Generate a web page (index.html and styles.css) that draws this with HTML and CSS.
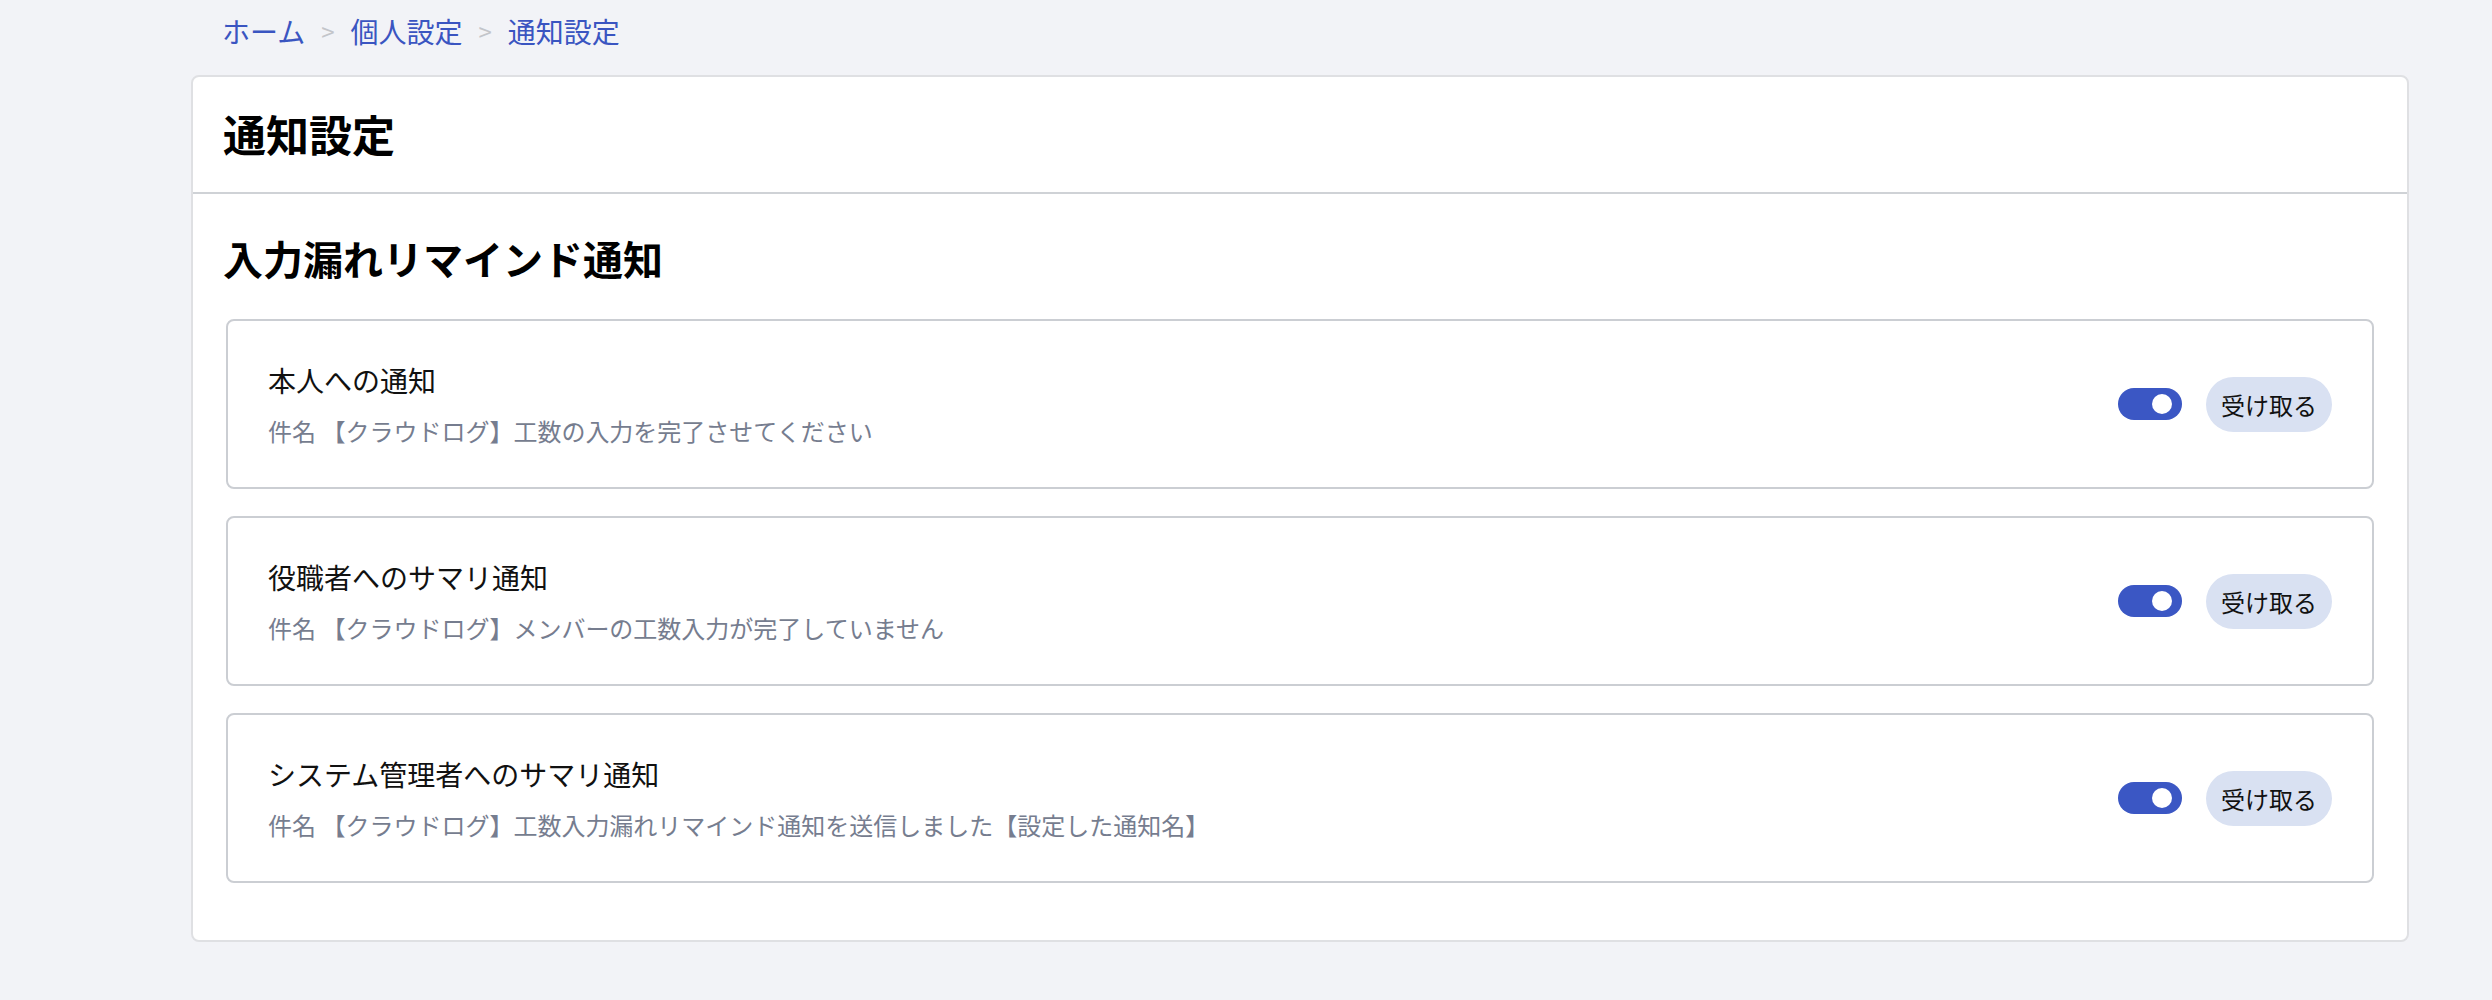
FILE: index.html
```html
<!DOCTYPE html>
<html lang="ja">
<head>
    <meta charset="UTF-8">
    <meta name="viewport" content="width=device-width, initial-scale=1.0">
    <title>通知設定</title>
    <link rel="stylesheet" href="styles.css">
</head>
<body>

<div class="page">
    <nav class="breadcrumb">
        <a href="#" class="crumb">ホーム</a>
        <span class="crumb-sep">&gt;</span>
        <a href="#" class="crumb">個人設定</a>
        <span class="crumb-sep">&gt;</span>
        <a href="#" class="crumb">通知設定</a>
    </nav>

    <div class="panel">
        <div class="panel-header">
            <h1 class="panel-title">通知設定</h1>
        </div>
        <div class="panel-body">
            <h2 class="section-title">入力漏れリマインド通知</h2>

            <div class="notice-card">
                <div class="notice-text">
                    <div class="notice-name">本人への通知</div>
                    <div class="notice-subject">件名 【クラウドログ】工数の入力を完了させてください</div>
                </div>
                <div class="notice-actions">
                    <label class="toggle">
                        <input type="checkbox" checked>
                        <span class="toggle-track"></span>
                    </label>
                    <button class="receive-btn">受け取る</button>
                </div>
            </div>

            <div class="notice-card">
                <div class="notice-text">
                    <div class="notice-name">役職者へのサマリ通知</div>
                    <div class="notice-subject">件名 【クラウドログ】メンバーの工数入力が完了していません</div>
                </div>
                <div class="notice-actions">
                    <label class="toggle">
                        <input type="checkbox" checked>
                        <span class="toggle-track"></span>
                    </label>
                    <button class="receive-btn">受け取る</button>
                </div>
            </div>

            <div class="notice-card">
                <div class="notice-text">
                    <div class="notice-name">システム管理者へのサマリ通知</div>
                    <div class="notice-subject">件名 【クラウドログ】工数入力漏れリマインド通知を送信しました【設定した通知名】</div>
                </div>
                <div class="notice-actions">
                    <label class="toggle">
                        <input type="checkbox" checked>
                        <span class="toggle-track"></span>
                    </label>
                    <button class="receive-btn">受け取る</button>
                </div>
            </div>
        </div>
    </div>
</div>

</body>
</html>
```

FILE: styles.css
```css
* {
    margin: 0;
    padding: 0;
    box-sizing: border-box;
}
body {
    font-family: "Noto Sans CJK JP", "Noto Sans", sans-serif;
    background-color: #f2f3f7;
    color: #111;
    height: 1000px;
}
.page {
    padding: 0 83px 0 191px;
}
.breadcrumb {
    display: flex;
    align-items: center;
    padding: 10px 0 23px 31px;
    height: 75px;
    font-size: 28px;
    line-height: 42px;
}
.crumb {
    color: #3a55c1;
    text-decoration: none;
}
.crumb-sep {
    color: #c3c5ca;
    font-size: 24px;
    margin: 0 16px;
}
.panel {
    background-color: #fff;
    border: 2px solid #dfe0e3;
    border-radius: 8px;
}
.panel-header {
    padding: 28px 30px 31px;
    border-bottom: 2px solid #cfd2d6;
}
.panel-title {
    font-size: 43px;
    line-height: 56px;
    font-weight: 700;
    color: #000;
}
.section-title {
    font-size: 40px;
    line-height: 56px;
    font-weight: 700;
    color: #000;
    margin-left: -3px;
}
.panel-body {
    padding: 36px 33px 57px;
}
.section-title {
    margin-bottom: 33px;
}
.notice-card {
    display: flex;
    justify-content: space-between;
    align-items: center;
    height: 170px;
    padding: 0 40px 0 40px;
    border: 2px solid #cbced3;
    border-radius: 8px;
    margin-bottom: 27px;
}
.notice-card:last-child {
    margin-bottom: 0;
}
.notice-name {
    font-size: 28px;
    line-height: 40px;
}
.notice-subject {
    font-size: 24px;
    line-height: 36px;
    margin-top: 13px;
    color: #767d8f;
}
.notice-actions {
    display: flex;
    align-items: center;
    gap: 24px;
}
.toggle {
    display: block;
    cursor: pointer;
}
.toggle input {
    display: none;
}
.toggle-track {
    display: block;
    position: relative;
    width: 64px;
    height: 32px;
    border-radius: 16px;
    background-color: #c9ccd3;
}
.toggle-track::after {
    content: "";
    position: absolute;
    top: 6px;
    left: 10px;
    width: 20px;
    height: 20px;
    border-radius: 50%;
    background-color: #fff;
}
.toggle input:checked + .toggle-track {
    background-color: #3b57c4;
}
.toggle input:checked + .toggle-track::after {
    left: 34px;
}
.receive-btn {
    font-family: "Noto Sans CJK JP", "Noto Sans", sans-serif;
    font-size: 24px;
    height: 55px;
    padding: 0 15px;
    border: none;
    border-radius: 28px;
    background-color: #d9e1f2;
    color: #111;
    cursor: pointer;
}
```
